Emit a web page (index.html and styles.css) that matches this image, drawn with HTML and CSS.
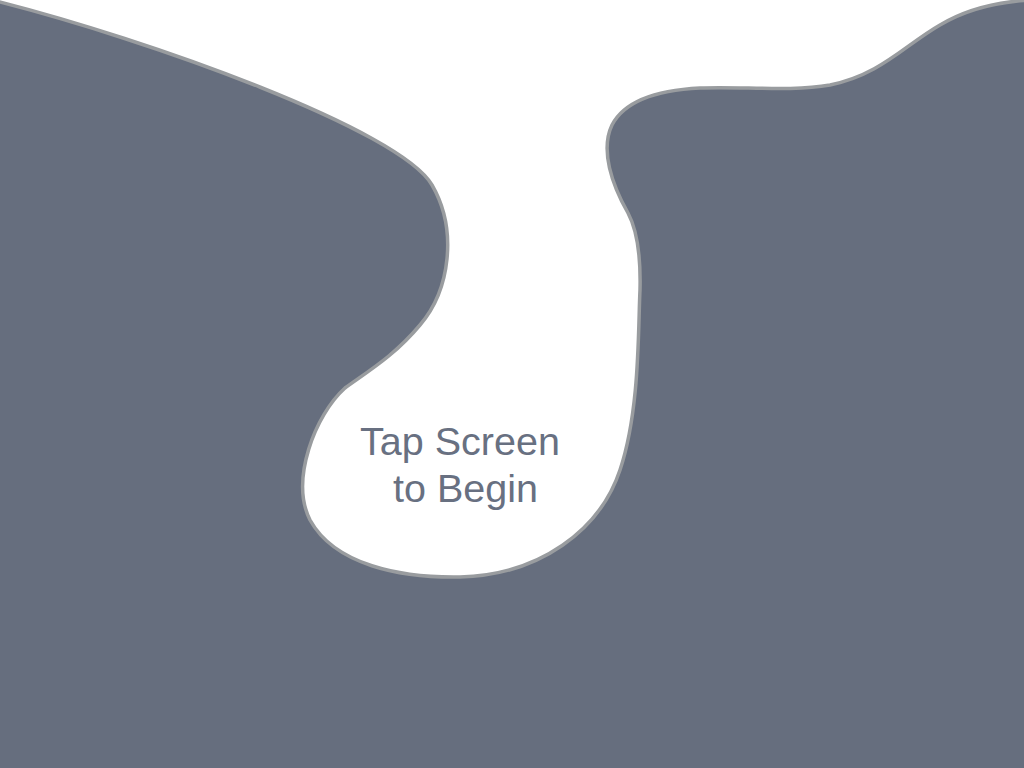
FILE: index.html
```html
<!DOCTYPE html>
<html>
<head>
<meta charset="utf-8">
<link rel="stylesheet" href="styles.css">
</head>
<body>
<main class="screen">
  <svg class="scene" width="1024" height="768" viewBox="0 0 1024 768">
    <rect x="0" y="0" width="1024" height="768" fill="#666e7e"/>
    <path fill="#ffffff" stroke="#999c9f" stroke-width="3.5" stroke-linejoin="round"
      d="M -4,1 C 150,40 400,130 432,185 C 458,230 450,290 420,325 C 395,355 370,370 345,388 C 315,415 290,480 310,520 C 335,565 400,578 460,577 C 540,575 600,530 620,470 C 640,410 638,330 640,290 C 641,250 636,228 628,213 C 612,185 600,150 612,125 C 625,100 660,90 700,88 C 740,86 790,92 830,85 C 880,75 905,45 940,25 C 965,10 995,2 1030,0 L 1030,-10 L -4,-10 Z"/>
  </svg>
  <div class="prompt">Tap Screen<br> to Begin</div>
</main>
</body>
</html>
```
FILE: styles.css
```css
html, body {
  margin: 0;
  padding: 0;
  background: #666e7e;
  overflow: hidden;
}
.screen {
  position: relative;
  width: 1024px;
  height: 768px;
}
.scene {
  display: block;
}
.prompt {
  position: absolute;
  left: 340px;
  top: 418px;
  width: 240px;
  text-align: center;
  white-space: pre;
  font-family: "Liberation Sans", Arial, sans-serif;
  font-size: 39.5px;
  line-height: 47px;
  color: #687081;
}
```
